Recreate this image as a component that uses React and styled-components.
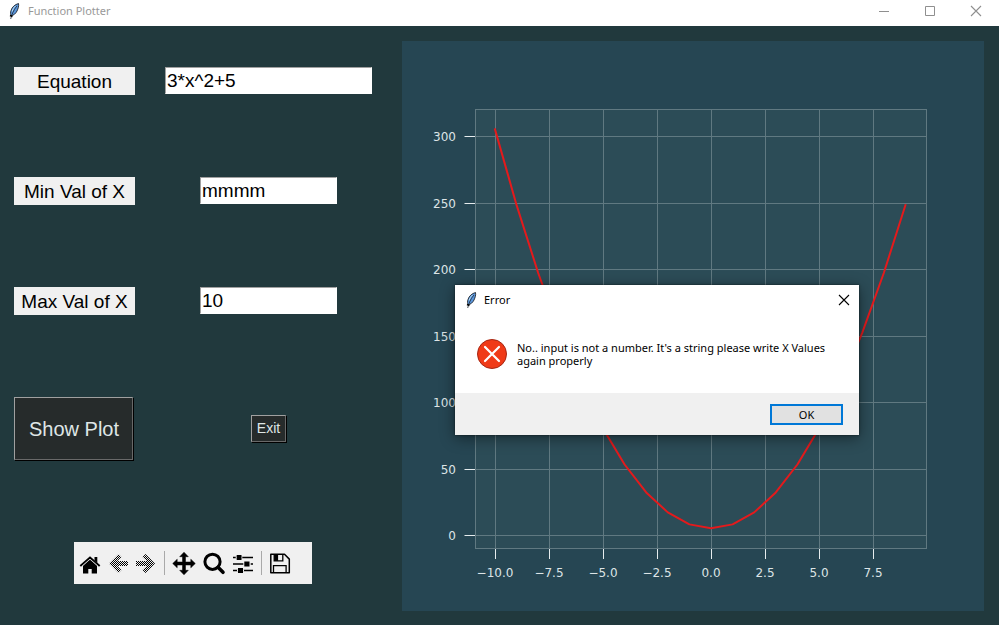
import React, { useState } from "react";
import styled, { createGlobalStyle } from "styled-components";

const GlobalStyle = createGlobalStyle`
  * { box-sizing: border-box; }
  body { margin: 0; background: #21393d; }
  button, input { font: inherit; border-radius: 0; }
`;

const uiFont = `"Noto Sans", "Open Sans", sans-serif`;
const formFont = `"Liberation Sans", Arial, sans-serif`;

const Window = styled.div`
  position: relative;
  display: flex;
  flex-direction: column;
  min-height: 100vh;
  background: #21393d;
`;

const TitleBar = styled.header`
  display: flex;
  align-items: center;
  height: 26px;
  padding-left: 6px;
  padding-bottom: 4px;
  background: #fff;
  color: #999;
  font: 11px/20px ${uiFont};
`;

const Title = styled.h1`
  flex: 1;
  margin: 0 0 0 5px;
  font: inherit;
`;

const CaptionButton = styled.button`
  display: grid;
  place-items: center;
  width: ${(p) => p.$width || 46}px;
  height: 22px;
  padding: 0;
  border: 0;
  background: transparent;
  color: ${(p) => p.$color || "#8f8f8f"};
`;

const Body = styled.main`
  flex: 1;
  display: flex;
  align-items: flex-start;
`;

const Controls = styled.form`
  flex: none;
  display: grid;
  grid-template-columns: 121px 207px;
  gap: 82px 30px;
  padding: 41px 30px 41px 14px;
  justify-items: center;
  align-items: start;
  font-family: ${formFont};
`;

const FieldLabel = styled.label`
  width: 100%;
  height: 28px;
  background: #f0f0f0;
  color: #000;
  font-size: 19px;
  line-height: 29px;
  text-align: center;
  white-space: nowrap;
`;

const Field = styled.input`
  width: ${(p) => p.$width};
  height: 27px;
  padding: 1px 1px 0;
  border: 1px solid #fff;
  border-top-color: #a0a0a0;
  border-left-color: #a0a0a0;
  background: #fff;
  color: #000;
  font-size: 19px;
  outline: 0;
`;

const DarkButton = styled.button`
  align-self: center;
  justify-self: ${(p) => (p.$large ? "start" : "center")};
  padding: ${(p) => (p.$large ? "20px 13px 18px 14px" : "5px")};
  border: 1px solid #a0a0a0;
  border-right-color: #696969;
  border-bottom-color: #696969;
  box-shadow: 1px 1px 0 #000;
  background: #262b2b;
  color: #dfe6e6;
  font-size: ${(p) => (p.$large ? 20 : 14)}px;
  line-height: ${(p) => (p.$large ? 23 : 15)}px;
  white-space: nowrap;
`;

const Toolbar = styled.div`
  grid-column: 1 / -1;
  display: flex;
  align-items: center;
  width: 238px;
  height: 42px;
  padding-left: 2px;
  background: #f0f0f0;
`;

const ToolGroup = styled.div`
  display: flex;
  gap: ${(p) => p.$gap || 0}px;
`;

const ToolButton = styled.button`
  width: 28px;
  height: 28px;
  padding: 0;
  border: 0;
  background: transparent;
  color: #000;
  svg { display: block; }
`;

const Separator = styled.span`
  width: 1px;
  height: 24px;
  margin: 0 4px;
  background: #a9a9a9;
`;

const Figure = styled.figure`
  flex: 1;
  min-width: 0;
  margin: 15px 15px 14px 0;
  background: #264653;
  svg { display: block; width: 100%; height: auto; }
  text {
    fill: #dde4e6;
    font-family: "DejaVu Sans", sans-serif;
    font-size: 12px;
  }
`;

const Dialog = styled.section`
  position: absolute;
  left: 455px;
  top: 285px;
  width: 404px;
  background: #fff;
  color: #000;
  box-shadow: 0 0 2px rgba(0, 0, 0, 0.6), 0 3px 14px rgba(0, 0, 0, 0.45);
  font: 11px/13px ${uiFont};
`;

const DialogTitleBar = styled.header`
  display: flex;
  align-items: center;
  height: 29px;
  padding-left: 8px;
`;

const DialogTitle = styled.h2`
  flex: 1;
  margin: 0 0 0 4px;
  font: inherit;
`;

const Message = styled.div`
  display: flex;
  gap: 10px;
  height: 79px;
  padding: 25px 22px 0;
  svg { flex: none; }
`;

const MessageText = styled.p`
  margin: 2px 0 0;
`;

const DialogFooter = styled.footer`
  display: flex;
  justify-content: flex-end;
  padding: 11px 16px 10px;
  background: #f0f0f0;
`;

const OkButton = styled.button`
  width: 73px;
  height: 21px;
  padding: 0;
  border: 2px solid #0078d7;
  background: #e1e1e1;
  color: #000;
  line-height: 17px;
`;

const Feather = () => (
  <svg width="17" height="18" viewBox="0 0 17 18" aria-hidden="true">
    <path d="M12.5 1.5C9 2.5 6 5 5 8.5c-.6 2-.7 4 .3 5.2C7.5 13.5 9.8 11.5 11 9c1.2-2.5 2-5 1.5-7.500Z" fill="#5a96dc" stroke="#20262e" strokeWidth=".9" />
    <path d="M11 4C8.500 7 6.500 10 4.700 17" fill="none" stroke="#1a2430" strokeWidth=".8" />
    <path d="M9.500 4C7.800 5.500 6.600 7.500 6.200 9.500" fill="none" stroke="#b9dcf5" strokeWidth="1" />
    <path d="M4 13.500l2.500 1" stroke="#000" strokeWidth="1.500" />
  </svg>
);

const Cross = () => (
  <svg width="12" height="12" viewBox="0 0 12 12" aria-hidden="true">
    <path d="M1 1l10 10M11 1L1 11" stroke="currentColor" strokeWidth="1.1" />
  </svg>
);

const icons = {
  Home: (
    <>
      <path d="M14 10.5l7 6.200V24.500h-5.300V20h-3.400v4.500H7v-7.800z" fill="currentColor" />
      <path d="M4.300 17L14 8.500l9.700 8.500" fill="none" stroke="currentColor" strokeWidth="1.900" />
      <path d="M18.500 8h2.800v6l-2.800-2.500z" fill="currentColor" />
      <path d="M6 17.200l8-7 8 7" fill="none" stroke="#ddd" strokeWidth=".6" />
    </>
  ),
  Back: <path d="M5 14.500L14.500 5l3 3-4.200 4H24v5H13.300l4.200 4-3 3z" fill="url(#dither)" />,
  Forward: <path d="M23 14.500L13.500 5l-3 3 4.200 4H4v5h10.700l-4.200 4 3 3z" fill="url(#dither)" />,
  Pan: (
    <path
      d="M15 3.200l4.300 4.500h-2.800V13h5.300v-2.800l4.500 4.300-4.500 4.300V16h-5.300v5.300h2.800L15 25.800l-4.300-4.500h2.800V16H8.200v2.800l-4.500-4.300 4.500-4.300V13h5.300V7.700h-2.800z"
      fill="currentColor"
      stroke="currentColor"
      strokeWidth=".5"
      strokeLinejoin="round"
    />
  ),
  Zoom: (
    <>
      <circle cx="13.500" cy="12.800" r="7.600" fill="none" stroke="currentColor" strokeWidth="3" />
      <path d="M19 18.300l5 5" stroke="currentColor" strokeWidth="3.600" strokeLinecap="round" />
    </>
  ),
  "Configure subplots": (
    <>
      <path d="M4 8.500h20M4 15h20M4 21.500h20" stroke="currentColor" strokeWidth="1.500" />
      <path d="M6.700 8.500h6.600M14.300 15h7.400M8 21.500h7" stroke="#f0f0f0" strokeWidth="2" />
      <path d="M7.700 6h4.800v5H7.700zM15.300 12.500h5.200v5h-5.200zM9 19h5v5H9z" fill="currentColor" />
    </>
  ),
  Save: (
    <>
      <path d="M4.800 5.300h13.700l4.800 4.800v13.700H4.800z" fill="none" stroke="currentColor" strokeWidth="1.500" strokeLinejoin="round" />
      <path d="M8.200 5v6.900h8.600V5" fill="none" stroke="currentColor" strokeWidth="1.300" />
      <path d="M8.200 5h3.900v6.900H8.200z" fill="currentColor" />
      <path d="M7.500 24v-7.300h12.600V24" fill="none" stroke="currentColor" strokeWidth="1.300" />
    </>
  ),
};

const Tool = ({ name }) => (
  <ToolButton type="button" aria-label={name}>
    <svg width="28" height="28" viewBox="0 0 28 28" aria-hidden="true">
      <defs>
        <pattern id="dither" width="2" height="2" patternUnits="userSpaceOnUse">
          <path d="M0 0h1v1H0zM1 1h1v1H1z" fill="#000" />
        </pattern>
      </defs>
      {icons[name]}
    </svg>
  </ToolButton>
);

const xTicks = [-10, -7.5, -5, -2.5, 0, 2.5, 5, 7.5];
const yTicks = [0, 50, 100, 150, 200, 250, 300];
const toX = (v) => 309 + v * 21.6;
const toY = (v) => 494 - v * 1.33;
const snapX = (v) => Math.round(v) + 0.5;
const snapY = (v) => Math.round(v) + 0.5;
const curve = Array.from({ length: 20 }, (_, i) => i - 10)
  .map((x) => `${toX(x)},${toY(3 * x * x + 5)}`)
  .join(" ");
const formatX = (v) => (v < 0 ? "−" : "") + Math.abs(v).toFixed(1);

const Plot = () => (
  <svg viewBox="0 0 582 570" role="img" aria-label="Plot of 3*x^2+5">
    <rect x="73.5" y="68.5" width="451" height="439" fill="#2c4c57" />
    {xTicks.map((v) => (
      <g key={v}>
        <path d={`M${snapX(toX(v))} 69V507`} stroke="#607981" />
        <path d={`M${snapX(toX(v))} 508v10`} stroke="#e6ecee" />
        <text x={toX(v)} y="536" textAnchor="middle">{formatX(v)}</text>
      </g>
    ))}
    {yTicks.map((v) => (
      <g key={v}>
        <path d={`M74 ${snapY(toY(v))}H524`} stroke="#607981" />
        <path d={`M62.5 ${snapY(toY(v))}h11`} stroke="#e6ecee" />
        <text x="54" y={snapY(toY(v)) + 4.5} textAnchor="end">{v}</text>
      </g>
    ))}
    <rect x="73.5" y="68.5" width="451" height="439" fill="none" stroke="#607981" />
    <polyline points={curve} fill="none" stroke="#e41a1c" strokeWidth="2" strokeLinecap="square" strokeLinejoin="round" />
  </svg>
);

const fields = [
  { id: "equation", label: "Equation", value: "3*x^2+5", width: "207px" },
  { id: "min", label: "Min Val of X", value: "mmmm", width: "137px" },
  { id: "max", label: "Max Val of X", value: "10", width: "137px" },
];

export default function App() {
  const [open, setOpen] = useState(true);
  return (
    <Window>
      <GlobalStyle />
      <TitleBar>
        <Feather />
        <Title>Function Plotter</Title>
        <CaptionButton aria-label="Minimize">
          <svg width="11" height="11" aria-hidden="true"><path d="M0 5.500h10" stroke="currentColor" /></svg>
        </CaptionButton>
        <CaptionButton aria-label="Maximize">
          <svg width="11" height="11" aria-hidden="true"><path d="M.5.500h9v9h-9z" fill="none" stroke="currentColor" /></svg>
        </CaptionButton>
        <CaptionButton aria-label="Close"><Cross /></CaptionButton>
      </TitleBar>
      <Body>
        <Controls onSubmit={(e) => e.preventDefault()}>
          {fields.map((f) => (
            <React.Fragment key={f.id}>
              <FieldLabel htmlFor={f.id}>{f.label}</FieldLabel>
              <Field id={f.id} defaultValue={f.value} $width={f.width} spellCheck={false} />
            </React.Fragment>
          ))}
          <DarkButton type="submit" $large onClick={() => setOpen(true)}>Show Plot</DarkButton>
          <DarkButton type="button">Exit</DarkButton>
          <Toolbar role="toolbar" aria-label="Plot tools">
            <ToolGroup>
              <Tool name="Home" />
              <Tool name="Back" />
              <Tool name="Forward" />
            </ToolGroup>
            <Separator />
            <ToolGroup $gap={2}>
              <Tool name="Pan" />
              <Tool name="Zoom" />
              <Tool name="Configure subplots" />
            </ToolGroup>
            <Separator />
            <Tool name="Save" />
          </Toolbar>
        </Controls>
        <Figure><Plot /></Figure>
      </Body>
      {open && (
        <Dialog role="alertdialog" aria-labelledby="error-title" aria-describedby="error-text">
          <DialogTitleBar>
            <Feather />
            <DialogTitle id="error-title">Error</DialogTitle>
            <CaptionButton $width={30} $color="#000" aria-label="Close dialog" onClick={() => setOpen(false)}>
              <Cross />
            </CaptionButton>
          </DialogTitleBar>
          <Message>
            <svg width="30" height="30" viewBox="0 0 30 30" aria-hidden="true">
              <circle cx="15" cy="15" r="14.5" fill="#f03a17" stroke="#a52714" />
              <path d="M8 8l14 14M22 8L8 22" stroke="#fff" strokeWidth="2.2" strokeLinecap="round" />
            </svg>
            <MessageText id="error-text">
              No.. input is not a number. It's a string please write X Values again properly
            </MessageText>
          </Message>
          <DialogFooter>
            <OkButton type="button" onClick={() => setOpen(false)}>OK</OkButton>
          </DialogFooter>
        </Dialog>
      )}
    </Window>
  );
}
